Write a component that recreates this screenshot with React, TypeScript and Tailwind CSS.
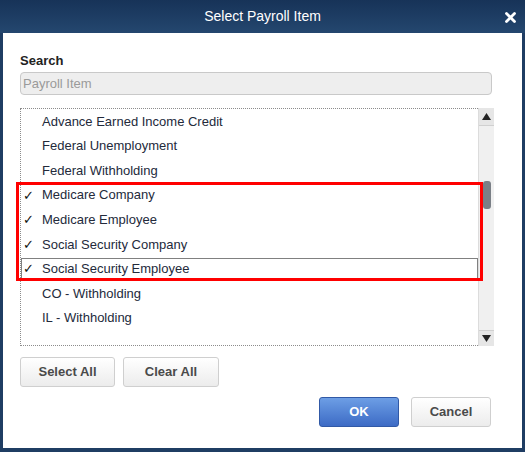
import React from "react";

type Item = {
  nome: string;
  marcado: boolean;
  foco?: boolean;
};

const itens: Item[] = [
  { nome: "Advance Earned Income Credit", marcado: false },
  { nome: "Federal Unemployment", marcado: false },
  { nome: "Federal Withholding", marcado: false },
  { nome: "Medicare Company", marcado: true },
  { nome: "Medicare Employee", marcado: true },
  { nome: "Social Security Company", marcado: true },
  { nome: "Social Security Employee", marcado: true, foco: true },
  { nome: "CO - Withholding", marcado: false },
  { nome: "IL - Withholding", marcado: false },
];

function Linha({ item }: { item: Item }) {
  return (
    <div className="h-[24.6px] flex items-center">
      <div
        className={
          "flex h-[22px] w-full items-center " +
          (item.foco ? "border border-[#808080]" : "border border-transparent")
        }
      >
        <span className="w-[20px] pl-[1px] text-[13px] leading-none text-[#111]">
          {item.marcado ? "✓" : ""}
        </span>
        <span className="text-[13px] text-[#232a3b]">{item.nome}</span>
      </div>
    </div>
  );
}

function BarraRolagem() {
  return (
    <div className="flex w-[16px] flex-col bg-[#f0f0f0] border-l border-[#dcdcdc]">
      <div className="flex h-[18px] items-center justify-center bg-[#e6e6e6] border-b border-[#d0d0d0]">
        <svg width="9" height="7" viewBox="0 0 9 7">
          <polygon points="4.5,0 9,7 0,7" fill="#222" />
        </svg>
      </div>
      <div className="flex-1 pt-[55px] pl-[4px]">
        <div className="h-[28px] w-[8px] rounded-[3px] bg-[#7a7f86]" />
      </div>
      <div className="flex h-[16px] items-center justify-center bg-[#e6e6e6] border-t border-[#d0d0d0]">
        <svg width="9" height="7" viewBox="0 0 9 7">
          <polygon points="0,0 9,0 4.5,7" fill="#222" />
        </svg>
      </div>
    </div>
  );
}

function Botao({ texto, largura }: { texto: string; largura: string }) {
  return (
    <button
      className={
        largura +
        " h-[30px] rounded-[3px] border border-[#cfcfcf] bg-linear-to-b from-[#ffffff] to-[#ececec] text-[13px] font-bold text-[#4a4a4a]"
      }
    >
      {texto}
    </button>
  );
}

export default function App() {
  return (
    <div
      className="relative flex h-[452px] w-[525px] flex-col bg-[#1f3d63]"
      style={{ fontFamily: '"Liberation Sans", Arial, sans-serif' }}
    >
      <div className="relative flex h-[33px] items-center justify-center bg-linear-to-b from-[#173358] to-[#24476f]">
        <span className="text-[14px] text-white">Select Payroll Item</span>
        <svg
          className="absolute right-[9px] top-[12px]"
          width="11"
          height="11"
          viewBox="0 0 11 11"
        >
          <path
            d="M1.5 1.5 L9.5 9.5 M9.5 1.5 L1.5 9.5"
            stroke="#ffffff"
            strokeWidth="2.8"
            strokeLinecap="round"
          />
        </svg>
      </div>

      <div className="mx-[3px] mb-[4px] flex flex-1 flex-col bg-white pl-[17px] pr-[30px] pt-[20px]">
        <div className="text-[13px] font-bold leading-[15px] text-[#222]">
          Search
        </div>
        <input
          placeholder="Payroll Item"
          className="mt-[4px] h-[23px] w-full rounded-[4px] border border-[#c9c9c9] bg-[#eeeeee] px-[2px] text-[13px] text-[#333] placeholder:text-[#9a9a9a] outline-none"
        />

        <div className="mt-[13px] flex h-[238px] w-[474px]">
          <div className="flex-1 border border-r-0 border-dotted border-[#8c8c8c]">
            {itens.map((item) => (
              <Linha key={item.nome} item={item} />
            ))}
          </div>
          <BarraRolagem />
        </div>

        <div className="mt-[11px] flex gap-[8px]">
          <Botao texto="Select All" largura="w-[95px]" />
          <Botao texto="Clear All" largura="w-[96px]" />
        </div>

        <div className="mt-[10px] flex justify-end gap-[12px] pr-[1px]">
          <button className="h-[30px] w-[80px] rounded-[3px] border border-[#3159a6] bg-linear-to-b from-[#6d9ee5] to-[#3d6bc5] text-[13px] font-bold text-white">
            OK
          </button>
          <Botao texto="Cancel" largura="w-[80px]" />
        </div>
      </div>

      <div className="pointer-events-none absolute left-[16px] top-[182px] h-[99px] w-[467px] border-[3px] border-[#ff0000]" />
    </div>
  );
}
